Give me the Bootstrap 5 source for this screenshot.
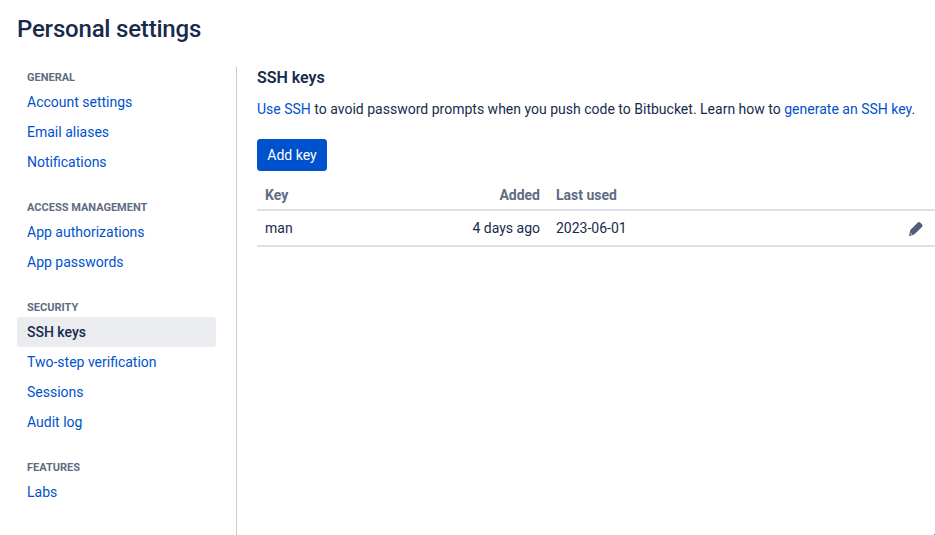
<!DOCTYPE html>
<html lang="en">
<head>
<meta charset="utf-8">
<meta name="viewport" content="width=device-width, initial-scale=1">
<title>Personal settings</title>
<link href="https://cdn.jsdelivr.net/npm/bootstrap@5.3.0/dist/css/bootstrap.min.css" rel="stylesheet">
<style>
body{font:14px/20px Roboto,"Liberation Sans",sans-serif;color:#172b4d;background:#fff}
a{color:#0052cc;text-decoration:none}
.page{height:535px;padding-left:17px}
.page-title{font-size:24px;line-height:28px;font-weight:500;letter-spacing:-.2px;padding-top:15px;margin-bottom:24px}
.side{width:220px;padding-right:20px;border-right:1px solid #ccc}
.side-title{font-size:11px;line-height:18px;font-weight:700;color:#5e6c84;padding:2px 10px 0;margin:0;text-transform:uppercase}
.side .nav{margin-bottom:20px}
.side .nav-link{padding:5px 10px;color:#0052cc;border-radius:3px}
.side .nav-link.active{background:#ebecf0;color:#172b4d;font-weight:500}
.main{padding-left:20px;min-width:0}
.main-title{font-size:16px;line-height:20px;font-weight:600;letter-spacing:-.02px;padding-top:1px;margin-bottom:11px}
.intro{margin-bottom:20px;letter-spacing:.005px}
.btn-add{--bs-btn-bg:#0052cc;--bs-btn-border-color:#0052cc;--bs-btn-color:#fff;--bs-btn-font-size:14px;--bs-btn-line-height:20px;--bs-btn-padding-x:9px;--bs-btn-padding-y:5px;--bs-btn-border-radius:3px;width:70px}
.keys{--bs-table-color:#172b4d;--bs-table-bg:#fff;--bs-border-color:#dfe1e6}
.keys th{color:#5e6c84;font-weight:700;padding:14px 8px 4px;border-bottom:2px solid #dfe1e6}
.keys td{padding:7px 8px;border-bottom:2px solid #dfe1e6}
.keys svg{display:block;margin:3px 3px 0 auto}
.col-key{width:142px}
.col-added{width:149px}
.grip{right:0;bottom:0;width:1px;height:1px;background:#777}
</style>
<script src="https://cdn.jsdelivr.net/npm/bootstrap@5.3.0/dist/js/bootstrap.bundle.min.js"></script>
</head>
<body>
<div class="page d-flex flex-column position-relative overflow-hidden">
  <h1 class="page-title">Personal settings</h1>
  <div class="d-flex flex-grow-1">
    <aside class="side flex-shrink-0">
      <h2 class="side-title">General</h2>
      <nav class="nav flex-column">
        <a class="nav-link" href="#">Account settings</a>
        <a class="nav-link" href="#">Email aliases</a>
        <a class="nav-link" href="#">Notifications</a>
      </nav>
      <h2 class="side-title">Access management</h2>
      <nav class="nav flex-column">
        <a class="nav-link" href="#">App authorizations</a>
        <a class="nav-link" href="#">App passwords</a>
      </nav>
      <h2 class="side-title">Security</h2>
      <nav class="nav flex-column">
        <a class="nav-link active" href="#" aria-current="page">SSH keys</a>
        <a class="nav-link" href="#">Two-step verification</a>
        <a class="nav-link" href="#">Sessions</a>
        <a class="nav-link" href="#">Audit log</a>
      </nav>
      <h2 class="side-title">Features</h2>
      <nav class="nav flex-column mb-0">
        <a class="nav-link" href="#">Labs</a>
      </nav>
    </aside>
    <main class="main flex-grow-1">
      <h2 class="main-title">SSH keys</h2>
      <p class="intro text-nowrap"><a href="#">Use SSH</a> to avoid password prompts when you push code to Bitbucket. Learn how to <a href="#">generate an SSH key</a>.</p>
      <button type="button" class="btn btn-add">Add key</button>
      <table class="table keys mb-0">
        <colgroup><col class="col-key"><col class="col-added"><col><col></colgroup>
        <thead><tr><th>Key</th><th class="text-end">Added</th><th>Last used</th><th></th></tr></thead>
        <tbody><tr>
          <td>man</td><td class="text-end">4 days ago</td><td>2023-06-01</td>
          <td><svg width="16" height="16" viewBox="0 0 16 16" fill="#505f79" aria-label="Edit"><path d="M8.6 2.7 9.8 1.5Q11 .5 12.2 1.5L14.1 3.4Q15.1 4.6 14.1 5.8L13 6.9 6.2 13.5 1.7 14.9Q.9 15 1.1 14.2L2.3 9.1ZM2.7 12 2.4 13 3 13.6 4 13.3Z" fill-rule="evenodd"/></svg></td>
        </tr></tbody>
      </table>
    </main>
  </div>
  <div class="grip position-absolute"></div>
</div>
</body>
</html>
